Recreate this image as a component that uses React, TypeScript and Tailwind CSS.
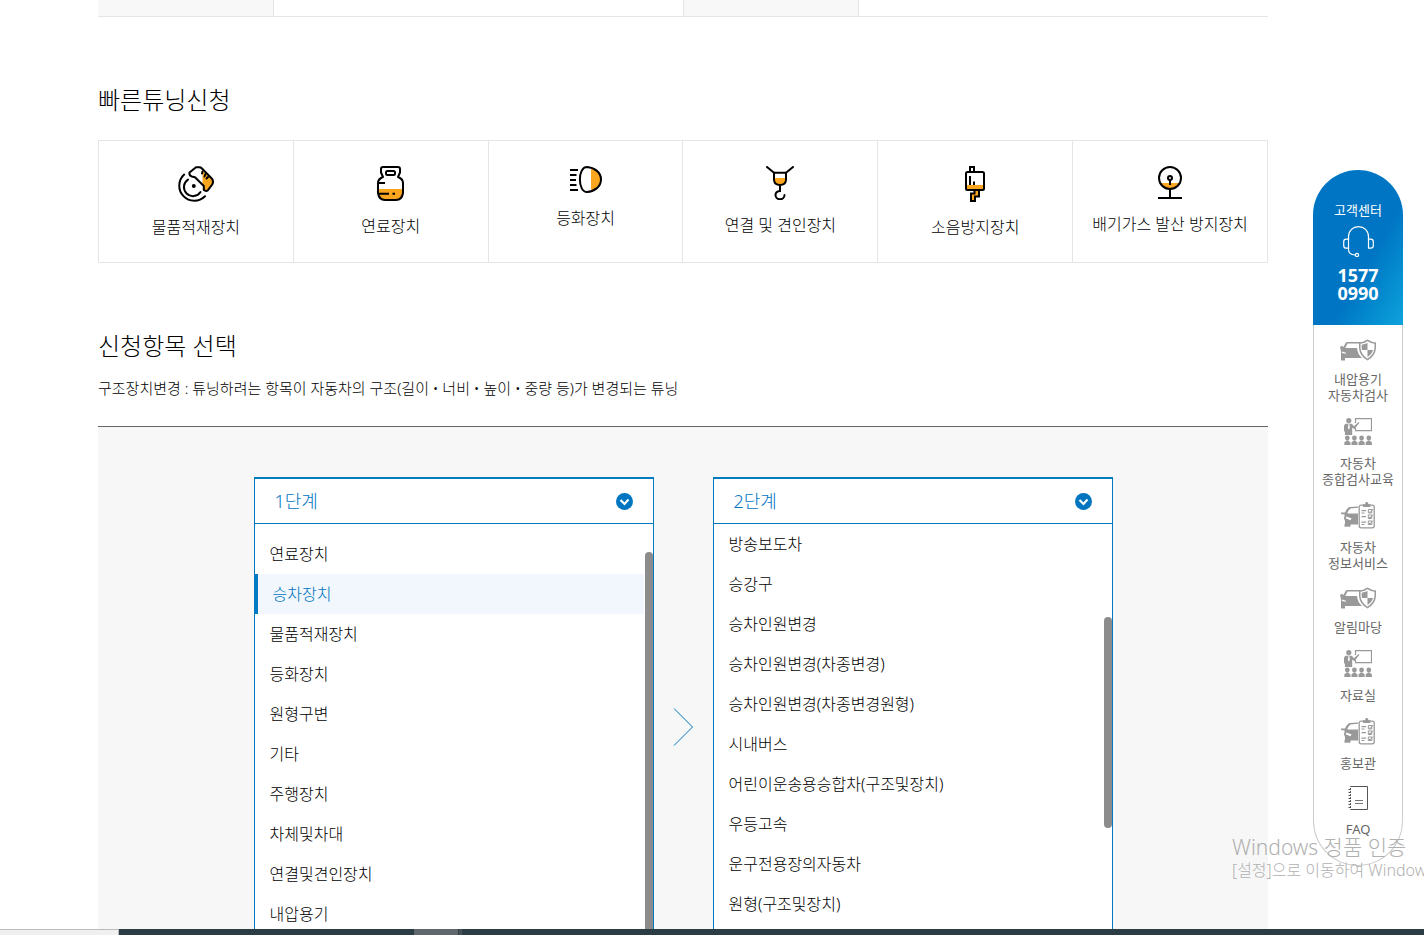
import { useState } from 'react';
import type { ReactNode } from 'react';

const QUICK_ITEMS: { label: string; icon: ReactNode }[] = [
  { label: '물품적재장치', icon: <BrakeIcon /> },
  { label: '연료장치', icon: <FuelIcon /> },
  { label: '등화장치', icon: <LampIcon /> },
  { label: '연결 및 견인장치', icon: <HookIcon /> },
  { label: '소음방지장치', icon: <MufflerIcon /> },
  { label: '배기가스 발산 방지장치', icon: <GaugeIcon /> },
];

const STEP1 = [
  '연료장치',
  '승차장치',
  '물품적재장치',
  '등화장치',
  '원형구변',
  '기타',
  '주행장치',
  '차체및차대',
  '연결및견인장치',
  '내압용기',
];

const STEP2 = [
  '방송보도차',
  '승강구',
  '승차인원변경',
  '승차인원변경(차종변경)',
  '승차인원변경(차종변경원형)',
  '시내버스',
  '어린이운송용승합차(구조및장치)',
  '우등고속',
  '운구전용장의자동차',
  '원형(구조및장치)',
];

const SIDE_LINKS: { lines: string[]; icon: ReactNode }[] = [
  { lines: ['내압용기', '자동차검사'], icon: <CarShieldIcon /> },
  { lines: ['자동차', '종합검사교육'], icon: <LectureIcon /> },
  { lines: ['자동차', '정보서비스'], icon: <CarListIcon /> },
  { lines: ['알림마당'], icon: <CarShieldIcon /> },
  { lines: ['자료실'], icon: <LectureIcon /> },
  { lines: ['홍보관'], icon: <CarListIcon /> },
  { lines: ['FAQ'], icon: <BookIcon /> },
];

function BrakeIcon() {
  return (
    <svg width="36" height="36" viewBox="0 0 36 36" fill="none" stroke="#000" strokeWidth="2" strokeLinecap="round">
      <path d="M24.500 5 34.500 14q1.500 3-.5 5.500L30 24q-2 1.500-4 0V20l-1.500-2z" fill="#faa61f" stroke="none" />
      <path d="M6.200 8.600A15 15 0 1 0 27 30.200" />
      <path d="M10 13.600A9 9 0 1 0 22.500 26" />
      <circle cx="15.800" cy="20" r="2" fill="#000" stroke="none" />
      <path d="M18 1.200h3.500q1.200 0 2.200 1L34.200 13q1.600 3 0 5.500L30 24.200q-2 1.500-4.200-.2V20L17 11.200l-3.200-.7q-2.800-1-2.300-4z" strokeLinejoin="round" />
      <path d="M24.500 5.500l-.5 2M27.500 8l-1 2.500M30 11l-1.500 1.500" />
    </svg>
  );
}

function FuelIcon() {
  return (
    <svg width="27" height="35" viewBox="0 0 27 35" fill="none" stroke="#000" strokeWidth="2">
      <path d="M1 23h25v4q-1 7-7 7H8q-6 0-7-7z" fill="#faa61f" stroke="none" />
      <path d="M6 11 4 6.500V3q0-2 2-2h15q2 0 2 2v3.500L21 11q5 2 5 6v10q-1 7-7 7H8q-6 0-7-7V17q0-4 5-6z" strokeLinejoin="round" />
      <rect x="9" y="5" width="9" height="4" rx="1.500" />
      <path d="M1 17h7M2 27.800h10M15.500 27.800h2.500" />
    </svg>
  );
}

function LampIcon() {
  return (
    <svg width="32" height="27" viewBox="0 0 32 27" fill="none" stroke="#000" strokeWidth="2">
      <path d="M21 2.500C27 4 31 8 31 13.500S27 23 21 24.500z" fill="#faa61f" stroke="none" />
      <path d="M17 1C7.500 1 7.500 26 17 26c7-.5 14-5 14-12.500S24 1.500 17 1z" />
      <path d="M0 4h8M0 9h6.500M0 14h6M0 19h6.500M0 24h8" />
    </svg>
  );
}

function HookIcon() {
  return (
    <svg width="28" height="34" viewBox="0 0 28 34" fill="none" stroke="#000" strokeWidth="2" strokeLinecap="round">
      <path d="M8 12h12v3q-1 4-6 4.500-5-.5-6-4.500z" fill="#faa61f" stroke="none" />
      <path d="M1 1l7 5.700h12L27 1" />
      <path d="M8 6.700V14q.5 5 6 5t6-5V6.700M14 20v5q-4.500.5-4.500 4a4.500 4.300 0 0 0 9 0" />
    </svg>
  );
}

function MufflerIcon() {
  return (
    <svg width="20" height="36" viewBox="0 0 20 36" fill="none" stroke="#000" strokeWidth="2">
      <path d="M2 19h16v5H2z" fill="#faa61f" stroke="none" />
      <path d="M5 6V1h4v5" />
      <rect x="1" y="6" width="18" height="18" rx="1.500" />
      <path d="M5 10v9M9 15.500V19" />
      <path d="M9.500 24v3.500H6V35h4v-4.500h4V24z" fill="#faa61f" />
    </svg>
  );
}

function GaugeIcon() {
  return (
    <svg width="24" height="33" viewBox="0 0 24 33" fill="none" stroke="#000" strokeWidth="2">
      <path d="M2.300 17h19.400Q19 23 12 23T2.300 17z" fill="#faa61f" stroke="none" />
      <circle cx="12" cy="12" r="11" />
      <circle cx="12" cy="12" r="2" />
      <path d="M12 14v5M12 23v9M0 32h24" />
    </svg>
  );
}

function HeadsetIcon() {
  return (
    <svg width="31" height="31" viewBox="0 0 31 31" fill="none" stroke="#fff" strokeWidth="1.200">
      <path d="M5.500 13.500V11C5.500 4.500 10 .7 15.500.7S25.500 4.500 25.500 11v2.500" />
      <path d="M5.500 13.200v9H3.200Q.7 22.200.7 19.500v-3.600q0-2.700 2.500-2.700zM25.500 13.200v9h2.300q2.500 0 2.500-2.700v-3.600q0-2.700-2.500-2.700z" />
      <path d="M5.500 22v1.500q0 5 6.500 5.500" />
      <circle cx="14" cy="29" r="1.600" />
    </svg>
  );
}

function CarShieldIcon() {
  return (
    <svg width="36" height="23" viewBox="0 0 36 23" fill="#999">
      <path d="M0 9l2-1.200L3.500 9 6 4.200Q6.500 4 8 4h13v1.500H7.500L5.300 10H17q.5 6 5 10H5v2.500H1V13z" />
      <path d="M2 13.500l4 1.200v1L2 15z" fill="#fff" />
      <path d="M27.500 1.500q4 2.500 8.500 3v5.500q-.5 8-8.500 12.500Q19.500 18 19 10V4.500q4.500-.5 8.500-3z" />
      <path d="M27.500 3.200q3.500 2 7 2.500V10q-.5 6.500-7 10.700Q21 16.500 20.500 10V5.700q3.500-.5 7-2.500z" fill="#fff" />
      <path d="M27.500 5v7H22q-.5-2-.3-5.300Q25 6.200 27.500 5zM27.500 12h5.700q-1.200 4-5.700 7.200z" />
    </svg>
  );
}

function LectureIcon() {
  return (
    <svg width="28" height="27" viewBox="0 0 28 27" fill="#999">
      <path d="M11.500 5V.6h16v12h-16V10" fill="none" stroke="#999" strokeWidth="1.200" />
      <circle cx="4.800" cy="2.600" r="2.600" />
      <path d="M1.500 5.800h6.300l2.200 2.400L14.500 4l.8.800L10.500 11.200 8.200 9.500V17H1V14L0 13V7.500z" />
      <path d="M4.400 6h1l.4 4-.9 1.500L4 10z" fill="#fff" />
      <circle cx="3.300" cy="20" r="2.400" />
      <circle cx="10.400" cy="20" r="2.400" />
      <circle cx="17.600" cy="20" r="2.400" />
      <circle cx="24.800" cy="20" r="2.400" />
      <path d="M.3 27v-2.500L2.500 22.500h1.700L6.500 24.500V27zM7.400 27v-2.500l2.200-2h1.700l2.200 2V27zM14.500 27v-2.500l2.200-2h1.700l2.300 2V27zM21.700 27v-2.500l2.200-2h1.700l2.300 2V27z" />
    </svg>
  );
}

function CarListIcon() {
  return (
    <svg width="34" height="27" viewBox="0 0 34 27" fill="#999">
      <path d="M0 10.500h4Q6 6 8.500 5l8.500-.5v1.300L9.500 6.500Q7.500 8 6.300 11.500H17V22.500H4V19L3 16.500 3.700 12.500 0 12z" />
      <path d="M5 14.500l5.500 1.700-1 2L5 16.500z" fill="#fff" />
      <path d="M3.500 22h6v2.700h-6z" />
      <rect x="18.200" y="3.200" width="15" height="22.600" rx="2" fill="#fff" stroke="#999" strokeWidth="1.300" />
      <path d="M22 2.200h2Q24 0 25.700 0t1.700 2.200h2V5H22z" />
      <path d="M20.500 8h4.500v1.200h-4.500zM20.500 10.500h3v1h-3zM20.500 14h4.500v1.200h-4.500zM20.500 19.500h4.500v1.200h-4.500zM20.500 22h3v1h-3z" />
      <path d="M27.300 7.500h3.500v3.500h-3.500zM27.300 13h3.500v3.500h-3.500zM27.300 19h3.500v3.500h-3.500zM28 9.500l1 1 3-3.500M28 15l1 1 3-3.500M28 21l1 1 3-3.500" fill="none" stroke="#999" />
    </svg>
  );
}

function BookIcon() {
  return (
    <svg width="20" height="25" viewBox="0 0 20 25" fill="none" stroke="#555">
      <path d="M2.500.5h17v23h-17z" />
      <path d="M2.500 1v22" stroke="#fff" strokeDasharray="1 2" />
      <path d="M.5 3.500h2M.5 6.500h2M.5 9.500h2M.5 12.500h2M.5 15.500h2M.5 18.500h2M.5 21.500h2" />
      <path d="M7 14.500h8M7 17.500h8" stroke="#777" />
    </svg>
  );
}

function StepBox({ title, children }: { title: string; children: ReactNode }) {
  return (
    <section className="w-[400px] border border-t-2 border-[#007ac2] bg-white">
      <h3 className="border-b border-[#007ac2]">
        <button className="flex h-11 w-full items-center justify-between px-5 pt-px text-lg font-light text-[#0075c0]">
          {title}
          <svg width="17" height="17" viewBox="0 0 17 17" fill="none">
            <circle cx="8.500" cy="8.500" r="8.500" fill="#0075c0" />
            <path d="M4.500 7l4 4 4-4.500" stroke="#fff" strokeWidth="2.200" />
          </svg>
        </button>
      </h3>
      <div className="relative h-[452px] overflow-hidden">{children}</div>
    </section>
  );
}

interface OptionListProps {
  items: string[];
  selected: string | null;
  onSelect: (item: string) => void;
}

function OptionList({ items, selected, onSelect }: OptionListProps) {
  return (
    <ul className="mr-[9px]">
      {items.map((item) => (
        <li key={item}>
          <button
            onClick={() => onSelect(item)}
            className={
              item === selected
                ? 'block h-10 w-full border-l-3 border-[#007ac2] bg-[#f1f7fc] px-[15px] text-left text-[#0075c0]'
                : 'block h-10 w-full px-[15px] text-left'
            }
          >
            {item}
          </button>
        </li>
      ))}
    </ul>
  );
}

function SideMenu() {
  return (
    <aside className="mt-[170px] w-[90px] shrink-0 text-center text-[13px] leading-4">
      <div className="flex h-[155px] flex-col items-center rounded-t-full bg-linear-to-br from-[#0075c3] from-60% to-[#10a3dc] pt-8 text-white">
        <span>고객센터</span>
        <span className="mt-2">
          <HeadsetIcon />
        </span>
        <strong className="mt-[9px] text-lg leading-[18px]">
          1577
          <br />
          0990
        </strong>
      </div>
      <nav className="flex flex-col gap-[15px] rounded-b-[45px] border border-t-0 border-[#ccc] bg-white pt-[13px] pb-7 text-[#666]">
        {SIDE_LINKS.map(({ lines, icon }) => (
          <a key={lines.join('')} href="#" className="flex flex-col items-center gap-2.5">
            {icon}
            <span>
              {lines.map((line) => (
                <span key={line} className="block whitespace-nowrap">
                  {line}
                </span>
              ))}
            </span>
          </a>
        ))}
      </nav>
    </aside>
  );
}

export default function App() {
  const [step1, setStep1] = useState<string | null>('승차장치');
  const [step2, setStep2] = useState<string | null>(null);

  return (
    <div className="relative flex h-screen flex-col overflow-hidden bg-white font-['Noto_Sans','Noto_Sans_CJK_KR',sans-serif] text-black">
      <div className="flex min-h-0 flex-1 items-start gap-[45px] overflow-hidden pr-[21px] pl-[98px]">
        <main className="min-w-0 flex-1">
          <table className="w-full table-fixed border-collapse">
            <tbody>
              <tr className="h-4 border-b border-[#e5e5e5]">
                <th className="w-[175px] border-r border-[#e5e5e5] bg-[#f8f8f8]" />
                <td />
                <th className="w-[175px] border-x border-[#e5e5e5] bg-[#f8f8f8]" />
                <td />
              </tr>
            </tbody>
          </table>

          <h2 className="mt-[65px] text-2xl leading-9 font-light">빠른튜닝신청</h2>
          <ul className="mt-[22px] grid grid-cols-6 border-y border-l border-[#e5e5e5]">
            {QUICK_ITEMS.map(({ label, icon }) => (
              <li key={label} className="h-[121px] border-r border-[#e5e5e5]">
                <a href="#" className="flex h-full flex-col items-center gap-[13px] pt-[25px] font-light whitespace-nowrap">
                  {icon}
                  {label}
                </a>
              </li>
            ))}
          </ul>

          <h2 className="mt-[65px] text-2xl leading-9 font-light">신청항목 선택</h2>
          <p className="mt-3 text-[15px] leading-6 font-light">
            구조장치변경 : 튜닝하려는 항목이 자동차의 구조(길이 • 너비 • 높이 • 중량 등)가 변경되는 튜닝
          </p>

          <div className="mt-[26px] flex items-center justify-center border-t border-[#666] bg-[#f7f7f7] py-[50px] font-light">
            <StepBox title="1단계">
              <div className="pt-2.5">
                <OptionList items={STEP1} selected={step1} onSelect={setStep1} />
              </div>
              <div className="absolute top-7 right-0 h-[420px] w-2 rounded-full bg-[#8c8c8c]" />
            </StepBox>
            <svg width="59" height="38" viewBox="0 0 59 38" fill="none" stroke="#0075c0">
              <path d="M20 .5 38.500 19 20 37.500" />
            </svg>
            <StepBox title="2단계">
              <OptionList items={STEP2} selected={step2} onSelect={setStep2} />
              <div className="absolute top-[93px] right-0 h-[211px] w-2 rounded-full bg-[#8c8c8c]" />
            </StepBox>
          </div>
        </main>
        <SideMenu />
      </div>

      {/* Windows activation notice */}
      <div className="pointer-events-none absolute right-0 bottom-[54px] w-48 overflow-hidden font-light whitespace-nowrap text-[#b0b0b0]">
        <p className="text-[21px] leading-6">Windows 정품 인증</p>
        <p className="text-base leading-[22px]">[설정]으로 이동하여 Windows</p>
      </div>

      <footer className="flex h-1.5 shrink-0 bg-[#2b3c44]">
        <div className="w-[119px] border-t border-r border-[#bbb] bg-[#f0f0f0]" />
        <div className="w-[295px]" />
        <div className="w-11 bg-[#5f676c]" />
        <div className="w-1 border-l border-[#333d42] bg-[#465057]" />
      </footer>
    </div>
  );
}
